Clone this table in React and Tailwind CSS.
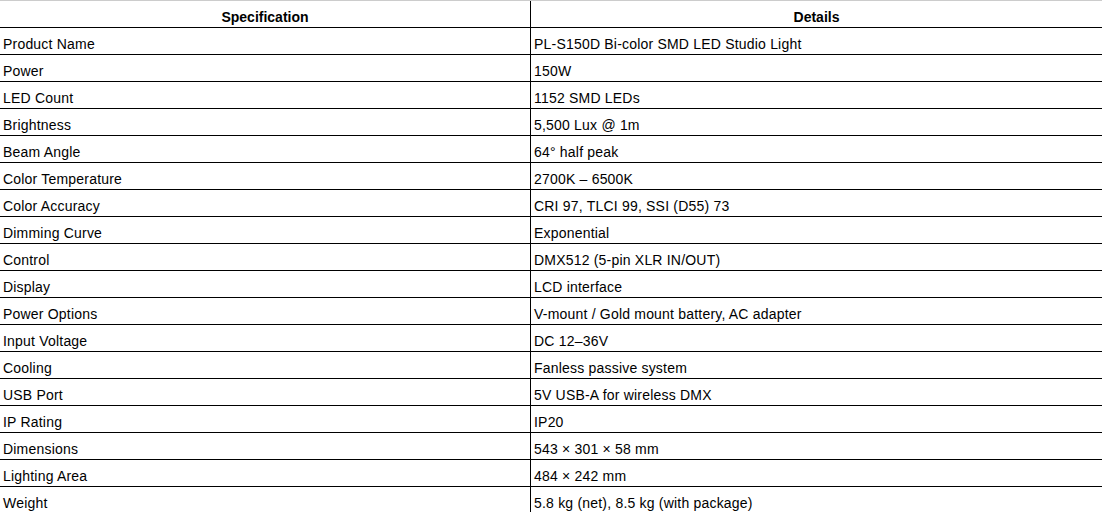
import React from 'react';

const specs = [
  ['Product Name', 'PL-S150D Bi-color SMD LED Studio Light'],
  ['Power', '150W'],
  ['LED Count', '1152 SMD LEDs'],
  ['Brightness', '5,500 Lux @ 1m'],
  ['Beam Angle', '64° half peak'],
  ['Color Temperature', '2700K – 6500K'],
  ['Color Accuracy', 'CRI 97, TLCI 99, SSI (D55) 73'],
  ['Dimming Curve', 'Exponential'],
  ['Control', 'DMX512 (5-pin XLR IN/OUT)'],
  ['Display', 'LCD interface'],
  ['Power Options', 'V-mount / Gold mount battery, AC adapter'],
  ['Input Voltage', 'DC 12–36V'],
  ['Cooling', 'Fanless passive system'],
  ['USB Port', '5V USB-A for wireless DMX'],
  ['IP Rating', 'IP20'],
  ['Dimensions', '543 × 301 × 58 mm'],
  ['Lighting Area', '484 × 242 mm'],
  ['Weight', '5.8 kg (net), 8.5 kg (with package)'],
];

const App = () => {
  return (
    <div className="w-full bg-white text-black text-[14px] font-['Liberation_Sans',Arial,sans-serif] overflow-hidden h-[512px]">
      {/* Header */}
      <div className="grid grid-cols-[531px_1fr] border-t border-[#cccccc] border-b border-b-black font-bold">
        <div className="h-[26px] pt-[8px] leading-4 text-center border-r border-black">Specification</div>
        <div className="h-[26px] pt-[8px] leading-4 text-center">Details</div>
      </div>

      {/* Rows */}
      {specs.map(([label, value]) => (
        <div key={label} className="grid grid-cols-[531px_1fr] border-b border-black tracking-[0.2px]">
          <div className="h-[26px] pt-[8px] px-[3px] leading-4 border-r border-black whitespace-nowrap">{label}</div>
          <div className="h-[26px] pt-[8px] px-[3px] leading-4 whitespace-nowrap">{value}</div>
        </div>
      ))}
    </div>
  );
};

export default App;
